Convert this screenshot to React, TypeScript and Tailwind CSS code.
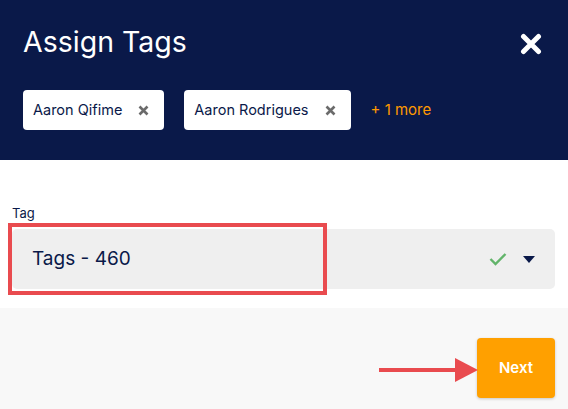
const chips = ["Aaron Qifime", "Aaron Rodrigues"];

const ChipClose = () => (
  <svg width="11" height="11" viewBox="0 0 11 11" className="ml-[16px]">
    <path d="M1.5 1.5 L9.5 9.5 M9.5 1.5 L1.5 9.5" stroke="#6b6b6b" strokeWidth="2.6" strokeLinecap="butt" />
  </svg>
);

export default function App() {
  return (
    <div className="relative w-[568px] h-[409px] flex flex-col overflow-hidden font-['Inter','Noto_Sans',sans-serif] text-[#0a1949]">
      <div className="h-[160px] bg-[#0a1949] px-[23px] pt-[25px]">
        <div className="flex items-start justify-between">
          <h1 className="text-[28.5px] leading-[34px] font-normal text-white">Assign Tags</h1>
          <svg width="22" height="22" viewBox="0 0 22 22" className="mt-[8px] mr-[3px]">
            <path d="M3.5 3.5 L18.5 18.5 M18.5 3.5 L3.5 18.5" stroke="#fff" strokeWidth="5" strokeLinecap="round" />
          </svg>
        </div>
        <div className="flex items-center gap-[20px] mt-[31px]">
          {chips.map((c) => (
            <div key={c} className="h-[40px] bg-white rounded-[4px] flex items-center pl-[10px] pr-[15px]">
              <span className="text-[14.5px] text-[#0a1949]">{c}</span>
              <ChipClose />
            </div>
          ))}
          <span className="text-[15px] text-[#ff9a00]">+ 1 more</span>
        </div>
      </div>

      <div className="bg-white pt-[45px] pb-[19px] pl-[12px] pr-[13px]">
        <div className="text-[13px] leading-[16px]">Tag</div>
        <div className="mt-[8px] h-[60px] bg-[#efefef] rounded-[5px] flex items-center pl-[20px] pr-[20px]">
          <span className="flex-1 text-[19px]">Tags - 460</span>
          <svg width="18" height="14" viewBox="0 0 18 14">
            <path d="M1.5 7 L6.5 12 L16.5 2" stroke="#62b46a" strokeWidth="2.4" fill="none" />
          </svg>
          <svg width="12" height="7" viewBox="0 0 12 7" className="ml-[16px]">
            <path d="M0 0 H12 L6 7 Z" fill="#0a1949" />
          </svg>
        </div>
      </div>

      <div className="flex-1 bg-[#f8f8f8] flex justify-end items-start pt-[30px] pr-[13px]">
        <button className="w-[78px] h-[60px] bg-[#ffa000] rounded-[4px] shadow-[0_1px_3px_rgba(0,0,0,0.2)] text-white text-[15px] font-semibold">
          Next
        </button>
      </div>

      <div className="absolute left-[8px] top-[223px] w-[319px] h-[72px] border-[4px] border-[#e94b4f]" />
      <svg width="100" height="26" viewBox="0 0 100 26" className="absolute left-[379px] top-[357px]">
        <rect x="0" y="11" width="78" height="4" fill="#e94b4f" />
        <path d="M76 1 L99 13 L76 25 Z" fill="#e94b4f" />
      </svg>
    </div>
  );
}
